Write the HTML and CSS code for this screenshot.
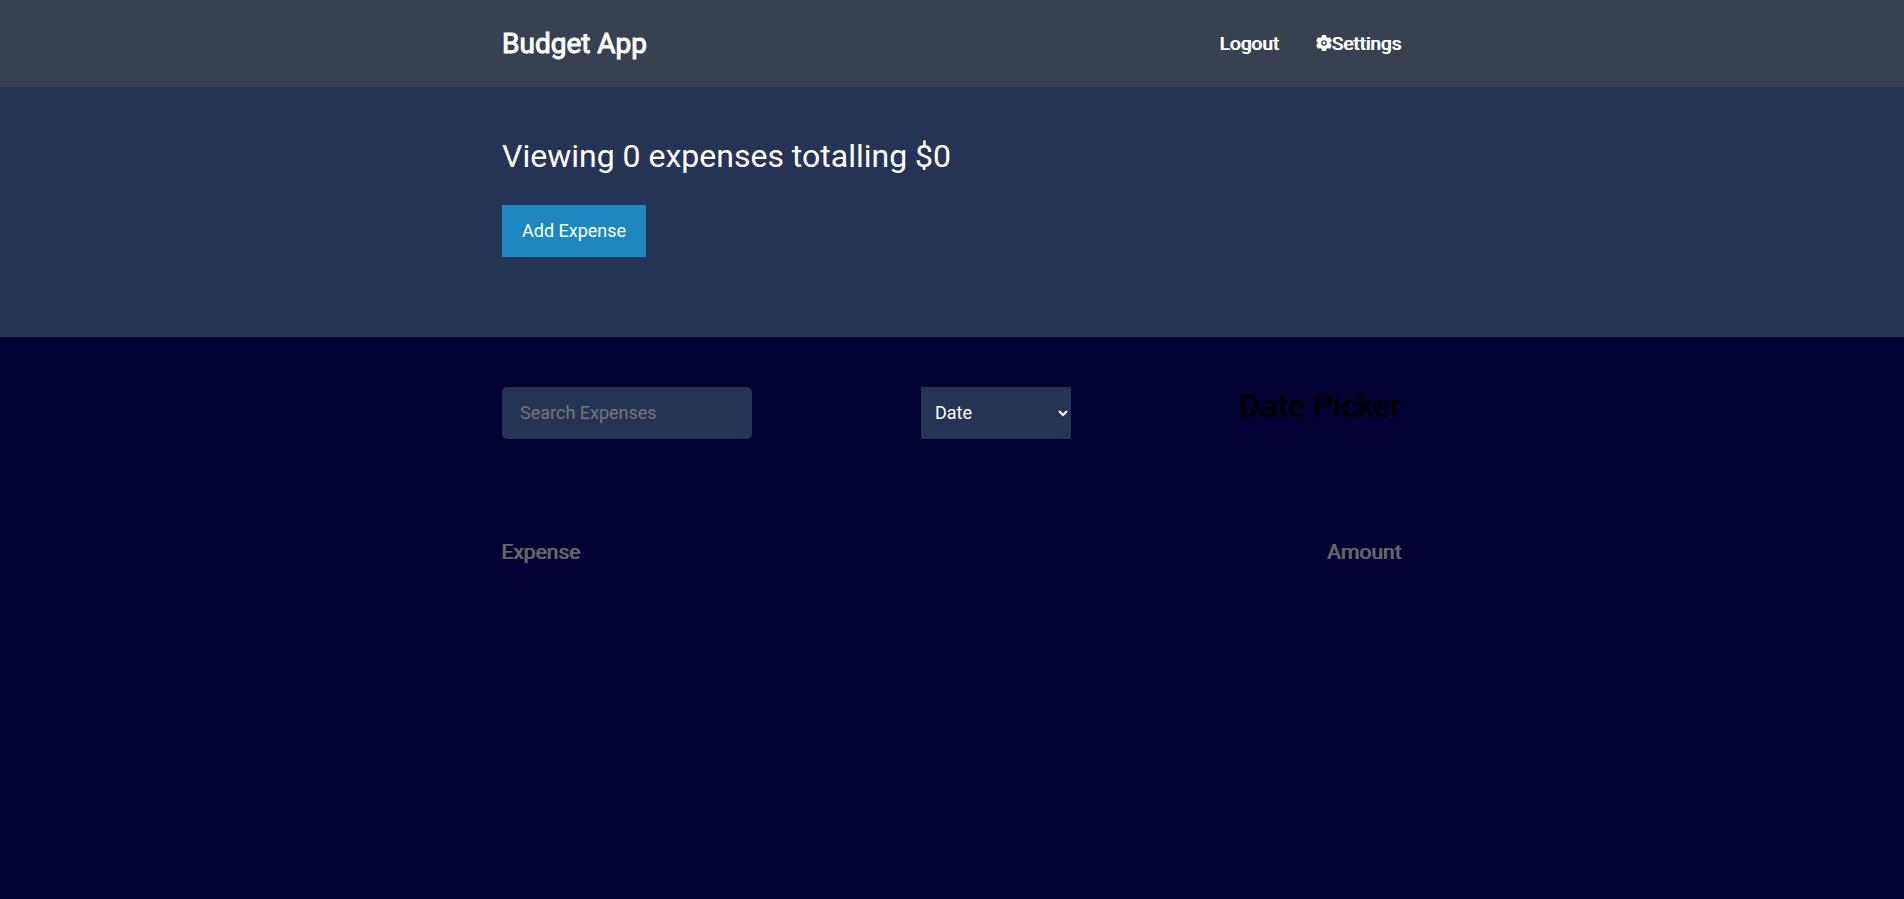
FILE: index.html
```html
<!DOCTYPE html>
<html lang="en">
<head>
<meta charset="utf-8">
<title>Budget App</title>
<link rel="stylesheet" href="styles.css">
</head>
<body>
<header class="header">
  <div class="container header-content">
    <a class="header-title" href="#"><h1>Budget App</h1></a>
    <nav class="header-nav">
      <button class="link-button" type="button">Logout</button>
      <button class="link-button" type="button"><svg class="gear" viewBox="0 0 16 16" aria-hidden="true"><g fill="currentColor"><path fill-rule="evenodd" d="M8 1.6a6.4 6.4 0 1 0 0 12.8A6.4 6.4 0 0 0 8 1.6Zm0 3.6a2.8 2.8 0 1 1 0 5.6A2.8 2.8 0 0 1 8 5.2Z"/><circle cx="8" cy="8" r="1.4"/><g id="teeth"><rect x="5.7" y="0" width="4.6" height="4" rx="1"/><rect x="5.7" y="12" width="4.6" height="4" rx="1"/></g><use href="#teeth" transform="rotate(60 8 8)"/><use href="#teeth" transform="rotate(120 8 8)"/></g></svg>Settings</button>
    </nav>
  </div>
</header>
<section class="summary">
  <div class="container">
    <h2 class="summary-title">Viewing 0 expenses totalling $0</h2>
    <a class="button" href="#">Add Expense</a>
  </div>
</section>
<main class="container">
  <div class="filters">
    <input class="text-input" type="text" placeholder="Search Expenses" aria-label="Search Expenses">
    <select class="select" aria-label="Sort by"><option>Date</option><option>Amount</option></select>
    <h1 class="date-picker">Date Picker</h1>
  </div>
  <div class="list-header">
    <h3>Expense</h3>
    <h3>Amount</h3>
  </div>
</main>
</body>
</html>
```
FILE: styles.css
```css
* { box-sizing: border-box; }
body {
  margin: 0;
  background: #020233;
  font-family: Roboto, sans-serif;
  font-size: 16px;
  line-height: 26px;
}
button, input, select { font-family: inherit; }
h1, h2, h3 { margin: 0; }
.link-button, .date-picker, .list-header h3 {
  font-weight: 400;
  text-shadow: -1px 0 currentColor;
}
.container { max-width: 900px; margin: 0 auto; }
.header { background: #374151; }
.header-content { display: flex; justify-content: space-between; align-items: center; padding: 19px 0 18px; }
.header-title { color: #fff; text-decoration: none; }
.header-title h1 {
  font-size: 28px;
  line-height: 50px;
  font-weight: 400;
  -webkit-text-stroke: 1px currentColor;
}
.header-nav { display: flex; gap: 36px; }
.link-button {
  display: flex;
  align-items: center;
  padding: 0 0 2px;
  border: 0;
  background: none;
  color: #fff;
  font-size: 19px;
}
.gear { width: 16px; height: 16px; margin-right: 1px; }
.summary { background: #253455; padding: 48px 0 80px; }
.summary-title { margin-bottom: 28px; color: #fff; font-size: 32px; line-height: 42px; font-weight: 400; }
.button {
  display: inline-block;
  padding: 13px 20px;
  background: #1c88bf;
  color: #fff;
  font-size: 18px;
  text-decoration: none;
}
.filters { display: flex; justify-content: space-between; align-items: flex-start; padding: 50px 0 92px; }
.text-input, .select { height: 52px; border: 0; background: #253455; color: #fff; font-size: 18px; }
.text-input { width: 250px; padding: 0 18px 1px; border-radius: 5px; }
.select { width: 150px; padding: 0 10px 1px; }
.date-picker { font-size: 32px; line-height: 38px; color: #000; }
.list-header { display: flex; justify-content: space-between; padding: 8px 0; color: #666; }
.list-header h3 { font-size: 21px; }
```
